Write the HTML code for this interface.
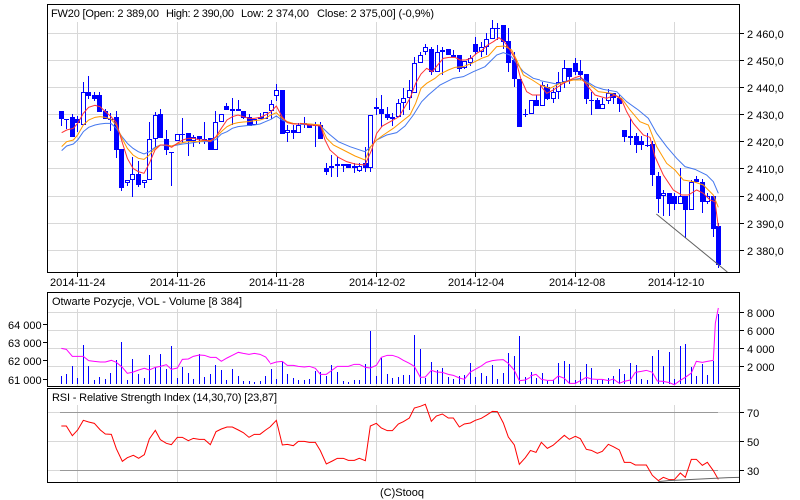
<!DOCTYPE html>
<html><head><meta charset="utf-8"><title>FW20</title>
<style>
html,body{margin:0;padding:0;background:#fff;width:800px;height:500px;overflow:hidden}
svg{display:block}
text{font-family:"Liberation Sans",Arial,sans-serif;font-size:11px;fill:#000}
</style></head><body>
<svg width="800" height="500" viewBox="0 0 800 500" xmlns="http://www.w3.org/2000/svg">
<rect width="800" height="500" fill="#fff"/>
<!-- grids -->
<path shape-rendering="crispEdges" fill="none" stroke="#d8d8d8" stroke-width="1" d="M48 33.5H739M48 60.5H739M48 87.5H739M48 114.5H739M48 141.5H739M48 168.5H739M48 196.5H739M48 223.5H739M48 250.5H739
M77.5 22V272M177.5 22V272M276.5 22V272M376.5 22V272M475.5 22V272M575.5 22V272M674.5 22V272
M48 312.5H739M48 330.5H739M48 348.5H739M48 366.5H739
M77.5 309V386M177.5 309V386M276.5 309V386M376.5 309V386M475.5 309V386M575.5 309V386M674.5 309V386
M48 412.5H739M48 441.5H739M48 470.5H739
M77.5 405V482M177.5 405V482M276.5 405V482M376.5 405V482M475.5 405V482M575.5 405V482M674.5 405V482"/>
<!-- wicks and dojis -->
<path shape-rendering="crispEdges" fill="none" stroke="#0000ff" d="M61.5 119V126M66.5 119V129M64 119.5H69M72.5 114V137M77.5 116V132M83.5 82V125M88.5 76V99M94.5 92V101M99.5 92V112M105.5 109V119M110.5 113V131M108 119.5H113M116.5 111V158M121.5 149V191M127.5 180V186M132.5 157V197M138.5 161V187M144.5 180V188M149.5 122V180M155.5 112V147M160.5 109V138M166.5 130V155M171.5 152V186M169 152.5H174M182.5 118V143M180 134.5H185M188.5 133V156M193.5 135V147M199.5 136V144M204.5 122V144M202 139.5H207M215.5 111V150M226.5 103V110M232.5 98V125M238.5 100V111M243.5 111V119M249.5 114V126M260.5 113V119M271.5 100V119M276.5 84V101M287.5 125V142M293.5 125V139M298.5 123V133M304.5 117V128M302 123.5H307M320.5 122V139M315.5 122V147M313 125.5H318M326.5 163V175M331.5 155V177M337.5 157V177M343.5 164V172M354.5 163V173M359.5 163V172M365.5 147V172M370.5 115V172M376.5 98V115M381.5 95V127M387.5 107V120M392.5 113V126M398.5 99V117M403.5 88V115M409.5 80V110M414.5 57V93M420.5 52V63M425.5 44V55M431.5 47V75M437.5 45V72M442.5 47V75M453.5 50V57M459.5 55V72M464.5 61V69M470.5 55V66M475.5 37V55M481.5 42V57M486.5 33V55M492.5 20V39M497.5 23V40M495 28.5H500M503.5 25V49M508.5 28V72M514.5 52V87M525.5 109V117M523 114.5H528M536.5 95V106M542.5 82V106M547.5 84V100M553.5 88V103M558.5 72V99M564.5 60V88M569.5 68V84M575.5 58V75M580.5 60V80M586.5 74V104M591.5 92V115M589 100.5H594M597.5 98V109M602.5 98V109M608.5 89V104M613.5 93V104M619.5 95V112M624.5 130V142M630.5 119V145M636.5 133V153M641.5 136V150M647.5 133V147M645 145.5H650M652.5 141V186M658.5 172V213M663.5 190V216M669.5 193V216M674.5 193V210M680.5 168V204M685.5 196V238M691.5 180V210M696.5 176V182M702.5 179V213M707.5 193V204M713.5 196V237M718.5 223V268"/>
<!-- filled bodies -->
<path shape-rendering="crispEdges" fill="#0000ff" d="M59 111h5v8h-5zM70 117h5v20h-5zM75 119h5v4h-5zM86 92h5v4h-5zM92 95h5v4h-5zM97 95h5v17h-5zM103 111h5v8h-5zM114 117h5v33h-5zM119 149h5v39h-5zM136 174h5v11h-5zM158 114h5v24h-5zM164 139h5v11h-5zM186 133h5v8h-5zM197 136h5v3h-5zM208 138h5v12h-5zM224 106h5v4h-5zM236 109h5v2h-5zM241 111h5v7h-5zM247 117h5v9h-5zM258 117h5v2h-5zM280 90h5v44h-5zM291 130h5v3h-5zM307 125h5v3h-5zM318 125h5v14h-5zM324 168h5v4h-5zM346 164h5v4h-5zM352 166h5v2h-5zM363 163h5v5h-5zM379 109h5v5h-5zM385 114h5v4h-5zM429 49h5v23h-5zM446 49h5v6h-5zM457 55h5v14h-5zM473 44h5v8h-5zM501 25h5v17h-5zM506 41h5v22h-5zM512 60h5v19h-5zM517 79h5v48h-5zM534 100h5v6h-5zM545 87h5v12h-5zM567 68h5v9h-5zM573 63h5v9h-5zM578 71h5v4h-5zM584 74h5v25h-5zM595 100h5v9h-5zM611 93h5v5h-5zM617 98h5v6h-5zM622 130h5v7h-5zM634 136h5v9h-5zM639 141h5v4h-5zM650 144h5v31h-5zM656 176h5v23h-5zM667 193h5v11h-5zM672 196h5v8h-5zM683 196h5v14h-5zM694 179h5v3h-5zM700 182h5v20h-5zM711 196h5v33h-5zM716 226h5v39h-5z"/>
<!-- hollow bodies -->
<path shape-rendering="crispEdges" fill="#fff" stroke="#0000ff" d="M81.500 92.500h4v32h-4zM125.500 180.500h4v2h-4zM130.500 174.500h4v5h-4zM142.500 180.500h4v2h-4zM147.500 139.500h4v40h-4zM153.500 115.500h4v23h-4zM175.500 134.500h4v6h-4zM191.500 137.500h4v3h-4zM213.500 122.500h4v27h-4zM219.500 114.500h4v7h-4zM230.500 109.500h4v1h-4zM252.500 119.500h4v5h-4zM263.500 112.500h4v6h-4zM269.500 104.500h4v6h-4zM274.500 90.500h4v5h-4zM285.500 130.500h4v2h-4zM296.500 125.500h4v7h-4zM329.500 166.500h4v1h-4zM335.500 164.500h4v1h-4zM341.500 164.500h4v1h-4zM357.500 166.500h4v4h-4zM368.500 115.500h4v52h-4zM374.500 107.500h4v1h-4zM390.500 117.500h4v1h-4zM396.500 103.500h4v13h-4zM401.500 98.500h4v4h-4zM407.500 90.500h4v7h-4zM412.500 63.500h4v29h-4zM418.500 55.500h4v7h-4zM423.500 47.500h4v4h-4zM435.500 52.500h4v19h-4zM440.500 50.500h4v1h-4zM451.500 55.500h4v1h-4zM462.500 61.500h4v6h-4zM468.500 58.500h4v4h-4zM479.500 47.500h4v4h-4zM484.500 39.500h4v7h-4zM490.500 28.500h4v10h-4zM529.500 100.500h4v13h-4zM540.500 85.500h4v20h-4zM551.500 92.500h4v6h-4zM556.500 82.500h4v9h-4zM562.500 68.500h4v13h-4zM600.500 104.500h4v4h-4zM606.500 93.500h4v7h-4zM628.500 136.500h4v1h-4zM661.500 193.500h4v2h-4zM678.500 196.500h4v7h-4zM689.500 182.500h4v27h-4zM705.500 196.500h4v5h-4z"/>
<!-- moving averages -->
<g fill="none" stroke-width="3">
<g transform="translate(40,0) scale(.33333)">
<polyline stroke="#4477ee" points="65,452 80,438 100,432 113,420 130,395 146,382 165,375 180,372 196,370 213,370 229,385 246,410 262,430 279,445 295,455 312,462 328,455 345,442 361,435 379,437 395,438 412,435 428,432 445,430 461,428 478,425 494,425 511,425 528,418 544,402 561,395 577,385 594,380 610,378 627,376 643,375 660,372 676,365 693,358 709,348 726,360 742,367 759,370 775,372 791,373 810,375"/>
<polyline stroke="#ff9900" points="65,440 80,425 100,420 113,405 130,375 146,360 165,352 180,350 196,352 213,358 229,375 246,415 262,445 279,465 295,475 312,478 328,465 345,445 361,435 379,435 395,438 412,432 428,428 445,425 461,425 478,425 494,422 511,422 528,412 544,395 561,380 577,372 594,368 610,366 627,365 643,362 660,360 676,355 693,345 709,338 726,355 742,365 759,370 775,372 791,372 810,372"/>
<polyline stroke="#ff3333" points="65,398 80,390 100,385 113,370 130,340 146,322 165,316 180,320 196,335 213,350 229,368 246,425 262,475 279,505 295,515 312,520 328,490 345,450 361,435 379,435 395,442 412,430 428,420 445,415 461,415 478,420 494,420 511,425 528,410 544,385 561,360 577,350 594,345 610,350 627,355 643,355 660,352 676,345 693,335 709,318 726,350 742,368 759,372 775,372 791,372 810,376"/>
</g>
<g transform="translate(300,0) scale(.33333)">
<polyline stroke="#4477ee" points="0,373 30,372 62,378 85,400 115,425 150,440 195,455 212,440 230,420 260,405 290,398 315,378 340,345 365,305 385,285 420,255 460,235 490,230 520,215 555,200 590,165 610,158 630,165 650,190 670,215 700,235 720,240"/>
<polyline stroke="#ff9900" points="0,370 30,372 62,375 80,415 100,435 130,450 165,468 195,480 212,440 230,420 250,405 280,385 305,365 330,345 347,310 363,265 380,250 405,235 420,222 445,210 465,202 490,200 515,190 545,175 565,168 590,140 613,138 635,150 650,180 670,225 697,240 720,255"/>
<polyline stroke="#ff3333" points="0,370 30,375 62,378 75,420 90,450 115,472 140,485 165,492 195,495 215,450 230,400 247,378 280,360 297,350 315,320 330,295 347,250 363,222 380,205 397,215 413,195 430,175 447,172 465,172 480,180 497,180 513,175 530,160 547,150 563,135 580,125 597,113 613,125 630,150 647,180 662,235 680,275 697,285 720,285"/>
</g>
<g transform="translate(540,60) scale(.33333)">
<polyline stroke="#4477ee" points="0,62 50,72 90,60 125,55 165,80 190,88 230,95 260,125 295,150 325,175 350,220 380,260 410,295 435,320 465,328 500,345 520,365 535,400"/>
<polyline stroke="#ff9900" points="0,75 30,85 60,70 100,60 125,60 150,75 175,95 215,100 245,115 270,150 300,185 325,195 350,260 380,310 405,330 430,360 460,365 490,375 520,405 535,442"/>
<polyline stroke="#ff3333" points="0,75 20,100 40,90 70,70 100,55 120,48 140,75 165,105 200,115 225,105 245,120 260,155 280,190 310,225 330,232 345,290 370,345 400,390 425,405 445,405 470,390 490,400 510,420 525,425 535,500"/>
<polyline stroke="#606060" points="349,462 562,636"/>
</g>
</g>
<!-- volume bars -->
<path shape-rendering="crispEdges" fill="none" stroke="#0000ff" d="M61.500 376V384M66.500 374V384M72.500 366V384M77.500 378V384M83.500 345V384M88.500 366V384M94.500 380V384M99.500 377V384M105.500 379V384M110.500 373V384M116.500 360V384M121.500 342V384M127.500 380V384M132.500 359V384M138.500 374V384M144.500 378V384M149.500 355V384M155.500 367V384M160.500 354V384M166.500 369V384M171.500 346V384M177.500 378V384M182.500 367V384M188.500 373V384M193.500 379V384M199.500 354V384M204.500 377V384M210.500 374V384M215.500 365V384M221.500 370V384M226.500 380V384M232.500 369V384M238.500 376V384M243.500 381V384M249.500 381V384M254.500 382V384M260.500 381V384M265.500 376V384M271.500 369V384M276.500 379V384M282.500 362V384M287.500 374V384M293.500 378V384M298.500 380V384M304.500 380V384M309.500 379V384M315.500 371V384M320.500 372V384M326.500 376V384M331.500 365V384M337.500 372V384M343.500 381V384M348.500 382V384M354.500 380V384M359.500 380V384M365.500 364V384M370.500 331V384M376.500 376V384M381.500 358V384M387.500 374V384M392.500 378V384M398.500 377V384M403.500 375V384M409.500 375V384M414.500 335V384M420.500 349V384M425.500 378V384M431.500 362V384M437.500 370V384M442.500 368V384M448.500 377V384M453.500 379V384M459.500 376V384M464.500 375V384M470.500 363V384M475.500 377V384M481.500 373V384M486.500 376V384M492.500 365V384M497.500 379V384M503.500 373V384M508.500 353V384M514.500 356V384M519.500 336V384M525.500 377V384M531.500 372V384M536.500 378V384M542.500 373V384M547.500 381V384M553.500 380V384M558.500 363V384M564.500 361V384M569.500 364V384M575.500 380V384M580.500 372V384M586.500 364V384M591.500 368V384M597.500 380V384M602.500 380V384M608.500 378V384M613.500 376V384M619.500 369V384M624.500 374V384M630.500 363V384M636.500 365V384M641.500 379V384M647.500 380V384M652.500 356V384M658.500 350V384M663.500 366V384M669.500 352V384M674.500 379V384M680.500 346V384M685.500 344V384M691.500 367V384M696.500 376V384M702.500 364V384M707.500 375V384M713.500 361V384M718.500 314V384"/>
<g fill="none" stroke-width="3">
<polyline stroke="#ff00ff" transform="translate(0,290) scale(.33333)" points="184,175 199,178 217,199 250,199 266,212 283,214 301,216 316,216 334,211 349,217 367,232 382,250 400,246 416,240 433,235 448,240 466,232 481,229 499,224 514,238 532,234 547,208 565,207 580,199 598,195 613,196 631,202 648,202 664,214 681,204 697,196 715,187 730,190 747,193 763,190 780,193 797,201 810,218"/>
<polyline stroke="#ff00ff" transform="translate(270,290) scale(.33333)" points="0,222 19,216 37,214 52,226 70,226 85,229 103,231 118,229 136,235 151,253 169,253 187,240 202,229 235,229 253,223 268,223 286,232 301,234 319,226 334,202 352,196 367,196 385,202 400,211 418,220 433,229 451,262 466,261 484,241 499,246 517,247 535,253 550,256 568,264 583,268 601,246 616,238 634,228 649,217 667,212 682,210 700,209 715,220 733,241 748,272 766,270 781,262"/>
<polyline stroke="#ff00ff" transform="translate(530,290) scale(.33333)" points="0,258 18,253 34,268 52,271 69,271 85,258 103,265 118,280 136,280 151,272 169,262 184,267 202,268 217,268 235,272 250,267 268,280 283,274 301,270 316,247 334,244 349,241 367,247 382,273 400,274 418,278 433,284 451,271 466,262 484,249 499,214 517,217 532,214 550,211 556,100 565,54"/>
</g>
<!-- RSI levels -->
<path shape-rendering="crispEdges" fill="none" stroke="#999" d="M60 412.500H718M60 470.500H718"/>
<g fill="none" stroke-width="3">
<polyline stroke="#ff0000" transform="translate(0,290) scale(.33333)" points="184,408 199,408 217,437 233,420 250,391 266,396 283,400 301,420 316,432 334,433 349,476 367,514 382,503 400,496 416,505 433,494 448,447 466,421 481,449 499,460 514,464 532,442 547,442 565,452 580,445 598,448 613,448 631,464 648,425 664,417 681,411 697,411 715,420 730,428 747,442 763,433 780,433 797,420 810,411"/>
<polyline stroke="#ff0000" transform="translate(270,290) scale(.33333)" points="0,411 19,391 37,465 52,463 70,467 85,454 103,454 118,457 136,457 151,482 169,522 187,513 202,505 220,505 235,511 253,511 268,505 286,512 301,408 319,400 334,414 352,422 367,422 385,402 400,395 418,384 433,354 451,349 466,343 484,394 499,378 517,372 535,384 550,384 568,411 583,402 601,399 616,391 634,385 649,376 667,364 682,365 700,399 715,441 733,465 748,523 766,503 781,482"/>
<polyline stroke="#ff0000" transform="translate(530,290) scale(.33333)" points="0,481 18,487 34,457 52,475 69,466 85,452 103,436 118,448 136,439 151,446 169,478 184,481 202,490 217,484 235,463 250,470 268,480 283,517 301,517 316,525 349,525 367,556 385,572 400,562 418,569 433,569 451,549 466,562 484,508 499,508 517,526 532,517 550,542 565,568"/>
<polyline stroke="#666666" transform="translate(530,290) scale(.33333)" points="385,575 415,572 475,569 535,566 595,563 628,562"/>
</g>
<!-- frames and ticks -->
<path shape-rendering="crispEdges" fill="none" stroke="#000" d="M47.500 4.500H739.500V272.500H47.500ZM47.500 292.500H739.500V386.500H47.500ZM47.500 388.500H739.500V482.500H47.500Z
M739 33.500H744M739 60.500H744M739 87.500H744M739 114.500H744M739 141.500H744M739 168.500H744M739 196.500H744M739 223.500H744M739 250.500H744
M77.500 272V277M177.500 272V277M276.500 272V277M376.500 272V277M475.500 272V277M575.500 272V277M674.500 272V277
M739 312.500H744M739 330.500H744M739 348.500H744M739 366.500H744
M43 324.500H47M43 342.500H47M43 360.500H47M43 379.500H47
M739 412.500H744M739 441.500H744M739 470.500H744"/>
<!-- text -->
<text x="51" y="17" textLength="108">FW20 [Open: 2 389,00</text>
<text x="166" y="17" textLength="68">High: 2 390,00</text>
<text x="241" y="17" textLength="68">Low: 2 374,00</text>
<text x="317" y="17" textLength="117">Close: 2 375,00] (-0,9%)</text>
<text x="747" y="38">2 460,0</text>
<text x="747" y="65">2 450,0</text>
<text x="747" y="92">2 440,0</text>
<text x="747" y="119">2 430,0</text>
<text x="747" y="146">2 420,0</text>
<text x="747" y="173">2 410,0</text>
<text x="747" y="201">2 400,0</text>
<text x="747" y="228">2 390,0</text>
<text x="747" y="255">2 380,0</text>
<text x="50" y="286">2014-11-24</text>
<text x="150" y="286">2014-11-26</text>
<text x="249" y="286">2014-11-28</text>
<text x="349" y="286">2014-12-02</text>
<text x="448" y="286">2014-12-04</text>
<text x="549" y="286">2014-12-08</text>
<text x="648" y="286">2014-12-10</text>
<text x="52" y="305" textLength="190">Otwarte Pozycje, VOL - Volume [8 384]</text>
<text x="8" y="329">64 000</text>
<text x="8" y="347">63 000</text>
<text x="8" y="365">62 000</text>
<text x="8" y="384">61 000</text>
<text x="747" y="317">8 000</text>
<text x="747" y="335">6 000</text>
<text x="747" y="353">4 000</text>
<text x="747" y="371">2 000</text>
<text x="52" y="401" textLength="225">RSI - Relative Strength Index (14,30,70) [23,87]</text>
<text x="747" y="417">70</text>
<text x="747" y="446">50</text>
<text x="747" y="475">30</text>
<text x="380" y="496">(C)Stooq</text>
</svg>
</body></html>
